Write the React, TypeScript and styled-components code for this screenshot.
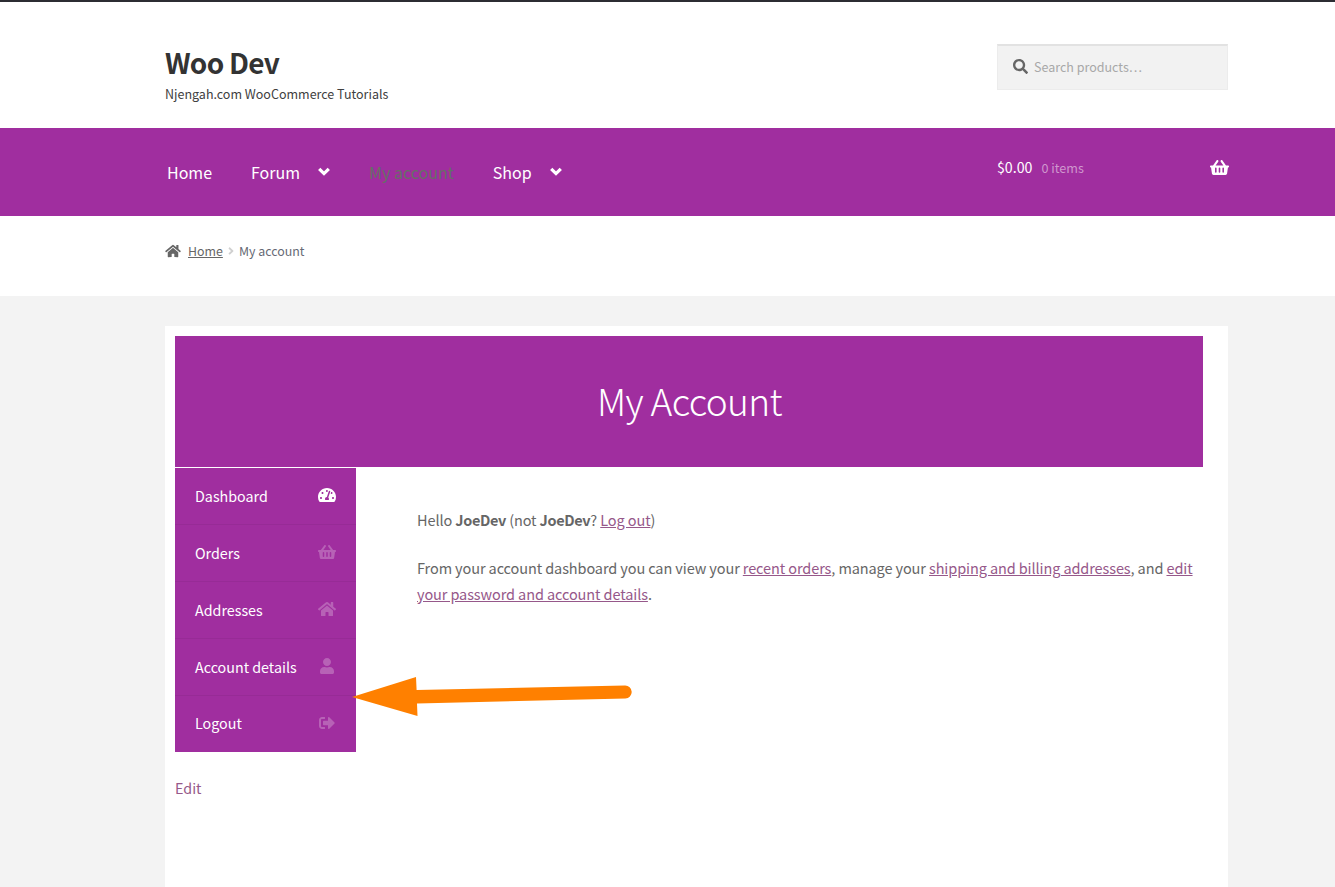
import React from "react";
import styled, { createGlobalStyle } from "styled-components";
import { FaHome, FaSearch, FaShoppingBasket, FaTachometerAlt, FaUser, FaAngleRight, FaSignOutAlt } from "react-icons/fa";

const PURPLE = "#a02e9f";
const FONT = `"Noto Sans CJK SC", "Open Sans", sans-serif`;

const Global = createGlobalStyle`
  html, body { margin: 0; padding: 0; height: 100%; overflow: hidden; background: #fff; }
  body { font-family: ${FONT}; color: #666666; }
  * { box-sizing: border-box; }
`;

const Page = styled.div`
  position: relative;
  height: 887px;
  display: flex;
  flex-direction: column;
  border-top: 2px solid #2c2d33;
  overflow: hidden;
`;

const Header = styled.header`
  height: 126px;
  padding: 0 107px 0 165px;
  display: flex;
  justify-content: space-between;
  align-items: flex-start;
`;

const Brand = styled.div`
  padding-top: 41px;
`;

const SiteTitle = styled.div`
  font-size: 28px;
  line-height: 38px;
  font-weight: 700;
  color: #333333;
  letter-spacing: -0.75px;
`;

const Tagline = styled.div`
  font-size: 12.5px;
  line-height: 20px;
  margin-top: 3px;
  color: #404040;
`;

const Search = styled.div`
  margin-top: 42px;
  width: 231px;
  height: 46px;
  background: #f2f2f2;
  border: 1px solid #ececec;
  border-top: 2px solid #e2e2e2;
  display: flex;
  align-items: center;
  gap: 6px;
  padding: 0 0 2px 15px;
  font-size: 12.5px;
  color: #a8a8a8;
  svg { color: #666666; width: 15px; height: 15px; }
`;

const NavBar = styled.nav`
  height: 88px;
  background: ${PURPLE};
  padding: 0 106px 0 167px;
  display: flex;
  justify-content: space-between;
`;

const Menu = styled.div`
  display: flex;
  align-items: center;
`;

const MenuItem = styled.a<{ $active?: boolean; $gap: number }>`
  display: flex;
  align-items: center;
  font-size: 16px;
  line-height: 24px;
  margin-right: ${(p) => p.$gap}px;
  color: ${(p) => (p.$active ? "#666f66" : "#ffffff")};
`;

const Chevron = styled.svg`
  margin-left: 18px;
  margin-top: -2px;
  width: 12px;
  height: 9px;
  fill: none;
  stroke: #fff;
  stroke-width: 3.2;
`;

const Cart = styled.div`
  width: 232px;
  height: 80px;
  display: flex;
  align-items: center;
  color: #fff;
  font-size: 14.2px;
  padding-bottom: 2px;
  svg { margin-left: auto; width: 19px; height: 17px; }
`;

const CartCount = styled.span`
  margin-left: 9px;
  font-size: 12.6px;
  color: #cf96ce;
`;

const Crumbs = styled.div`
  height: 80px;
  padding: 0 0 11px 165px;
  display: flex;
  align-items: center;
  font-size: 12.4px;
  color: #666a75;
`;

const CrumbHome = styled.a`
  display: flex;
  align-items: center;
  color: #666666;
  text-decoration: underline;
  svg { width: 16px; height: 14px; margin-right: 7px; }
`;

const CrumbSep = styled.span`
  display: inline-flex;
  margin: 1px 4px 0 4px;
  color: #d0d0d0;
  svg { width: 8px; height: 12px; }
`;

const Main = styled.main`
  flex: 1;
  background: #f3f3f3;
  padding: 30px 107px 0 165px;
  display: flex;
`;

const Card = styled.div`
  flex: 1;
  background: #fff;
  padding: 10px 25px 0 10px;
`;

const Banner = styled.div`
  height: 131px;
  background: ${PURPLE};
  color: #fff;
  display: flex;
  align-items: center;
  justify-content: center;
  font-size: 37px;
  font-weight: 300;
  letter-spacing: -0.65px;
  padding: 0 0 4px 1px;
`;

const Columns = styled.div`
  display: flex;
  margin-top: 1px;
`;

const AccountNav = styled.div`
  width: 181px;
  background: ${PURPLE};
`;

const AccountRow = styled.a<{ $last?: boolean }>`
  height: ${(p) => (p.$last ? 56 : 57)}px;
  display: flex;
  align-items: center;
  justify-content: space-between;
  padding: 0 20px ${(p) => (p.$last ? 3 : 2)}px 20px;
  font-size: 14.3px;
  color: #fff;
  border-bottom: ${(p) => (p.$last ? "none" : "1px solid #972b96")};
`;

const RowIcon = styled.span<{ $bright?: boolean }>`
  display: flex;
  color: ${(p) => (p.$bright ? "#fff" : "#b762b6")};
  svg { width: 18px; height: 16px; }
`;

const Body = styled.div`
  flex: 1;
  padding: 39px 8px 0 61px;
  font-size: 14.5px;
  letter-spacing: -0.1px;
  line-height: 26px;
  color: #666666;
  strong { letter-spacing: -0.35px; }
`;

const Para = styled.p`
  margin: 0 0 22px;
`;

const Link = styled.a`
  color: #96588a;
  text-decoration: underline;
`;

const EditLink = styled.a`
  display: block;
  margin-top: 23px;
  font-size: 14.3px;
  line-height: 26px;
  color: #96588a;
`;

const Arrow = styled.svg`
  position: absolute;
  left: 340px;
  top: 658px;
  width: 310px;
  height: 70px;
`;

const rows = [
  { label: "Dashboard", icon: <FaTachometerAlt />, bright: true },
  { label: "Orders", icon: <FaShoppingBasket /> },
  { label: "Addresses", icon: <FaHome /> },
  { label: "Account details", icon: <FaUser /> },
  { label: "Logout", icon: <FaSignOutAlt />, last: true },
];

const Down = () => (
  <Chevron viewBox="0 0 12 9">
    <path d="M1.2 1.8 L6 6.6 L10.8 1.8" />
  </Chevron>
);

export default function App() {
  return (
    <Page>
      <Global />
      <Header>
        <Brand>
          <SiteTitle>Woo Dev</SiteTitle>
          <Tagline>Njengah.com WooCommerce Tutorials</Tagline>
        </Brand>
        <Search>
          <FaSearch />
          <span>Search products…</span>
        </Search>
      </Header>
      <NavBar>
        <Menu>
          <MenuItem $gap={39}>Home</MenuItem>
          <MenuItem $gap={39}>Forum<Down /></MenuItem>
          <MenuItem $gap={39} $active>My account</MenuItem>
          <MenuItem $gap={0}>Shop<Down /></MenuItem>
        </Menu>
        <Cart>
          $0.00<CartCount>0 items</CartCount>
          <FaShoppingBasket />
        </Cart>
      </NavBar>
      <Crumbs>
        <CrumbHome><FaHome />Home</CrumbHome>
        <CrumbSep><FaAngleRight /></CrumbSep>
        My account
      </Crumbs>
      <Main>
        <Card>
          <Banner>My Account</Banner>
          <Columns>
            <AccountNav>
              {rows.map((r) => (
                <AccountRow key={r.label} $last={r.last}>
                  {r.label}
                  <RowIcon $bright={r.bright}>{r.icon}</RowIcon>
                </AccountRow>
              ))}
            </AccountNav>
            <Body>
              <Para>
                Hello <strong>JoeDev</strong> (not <strong>JoeDev</strong>? <Link>Log out</Link>)
              </Para>
              <Para>
                From your account dashboard you can view your <Link>recent orders</Link>, manage your{" "}
                <Link>shipping and billing addresses</Link>, and <Link>edit your password and account details</Link>.
              </Para>
            </Body>
          </Columns>
          <EditLink>Edit</EditLink>
        </Card>
      </Main>
      <Arrow viewBox="0 0 310 70">
        <path d="M12 37 L76 17 L76.6 30 L285 25.5 A6.5 6.5 0 0 1 285.4 38.5 L77 43.5 L77.5 56 Z" fill="#ff8000" />
      </Arrow>
    </Page>
  );
}
